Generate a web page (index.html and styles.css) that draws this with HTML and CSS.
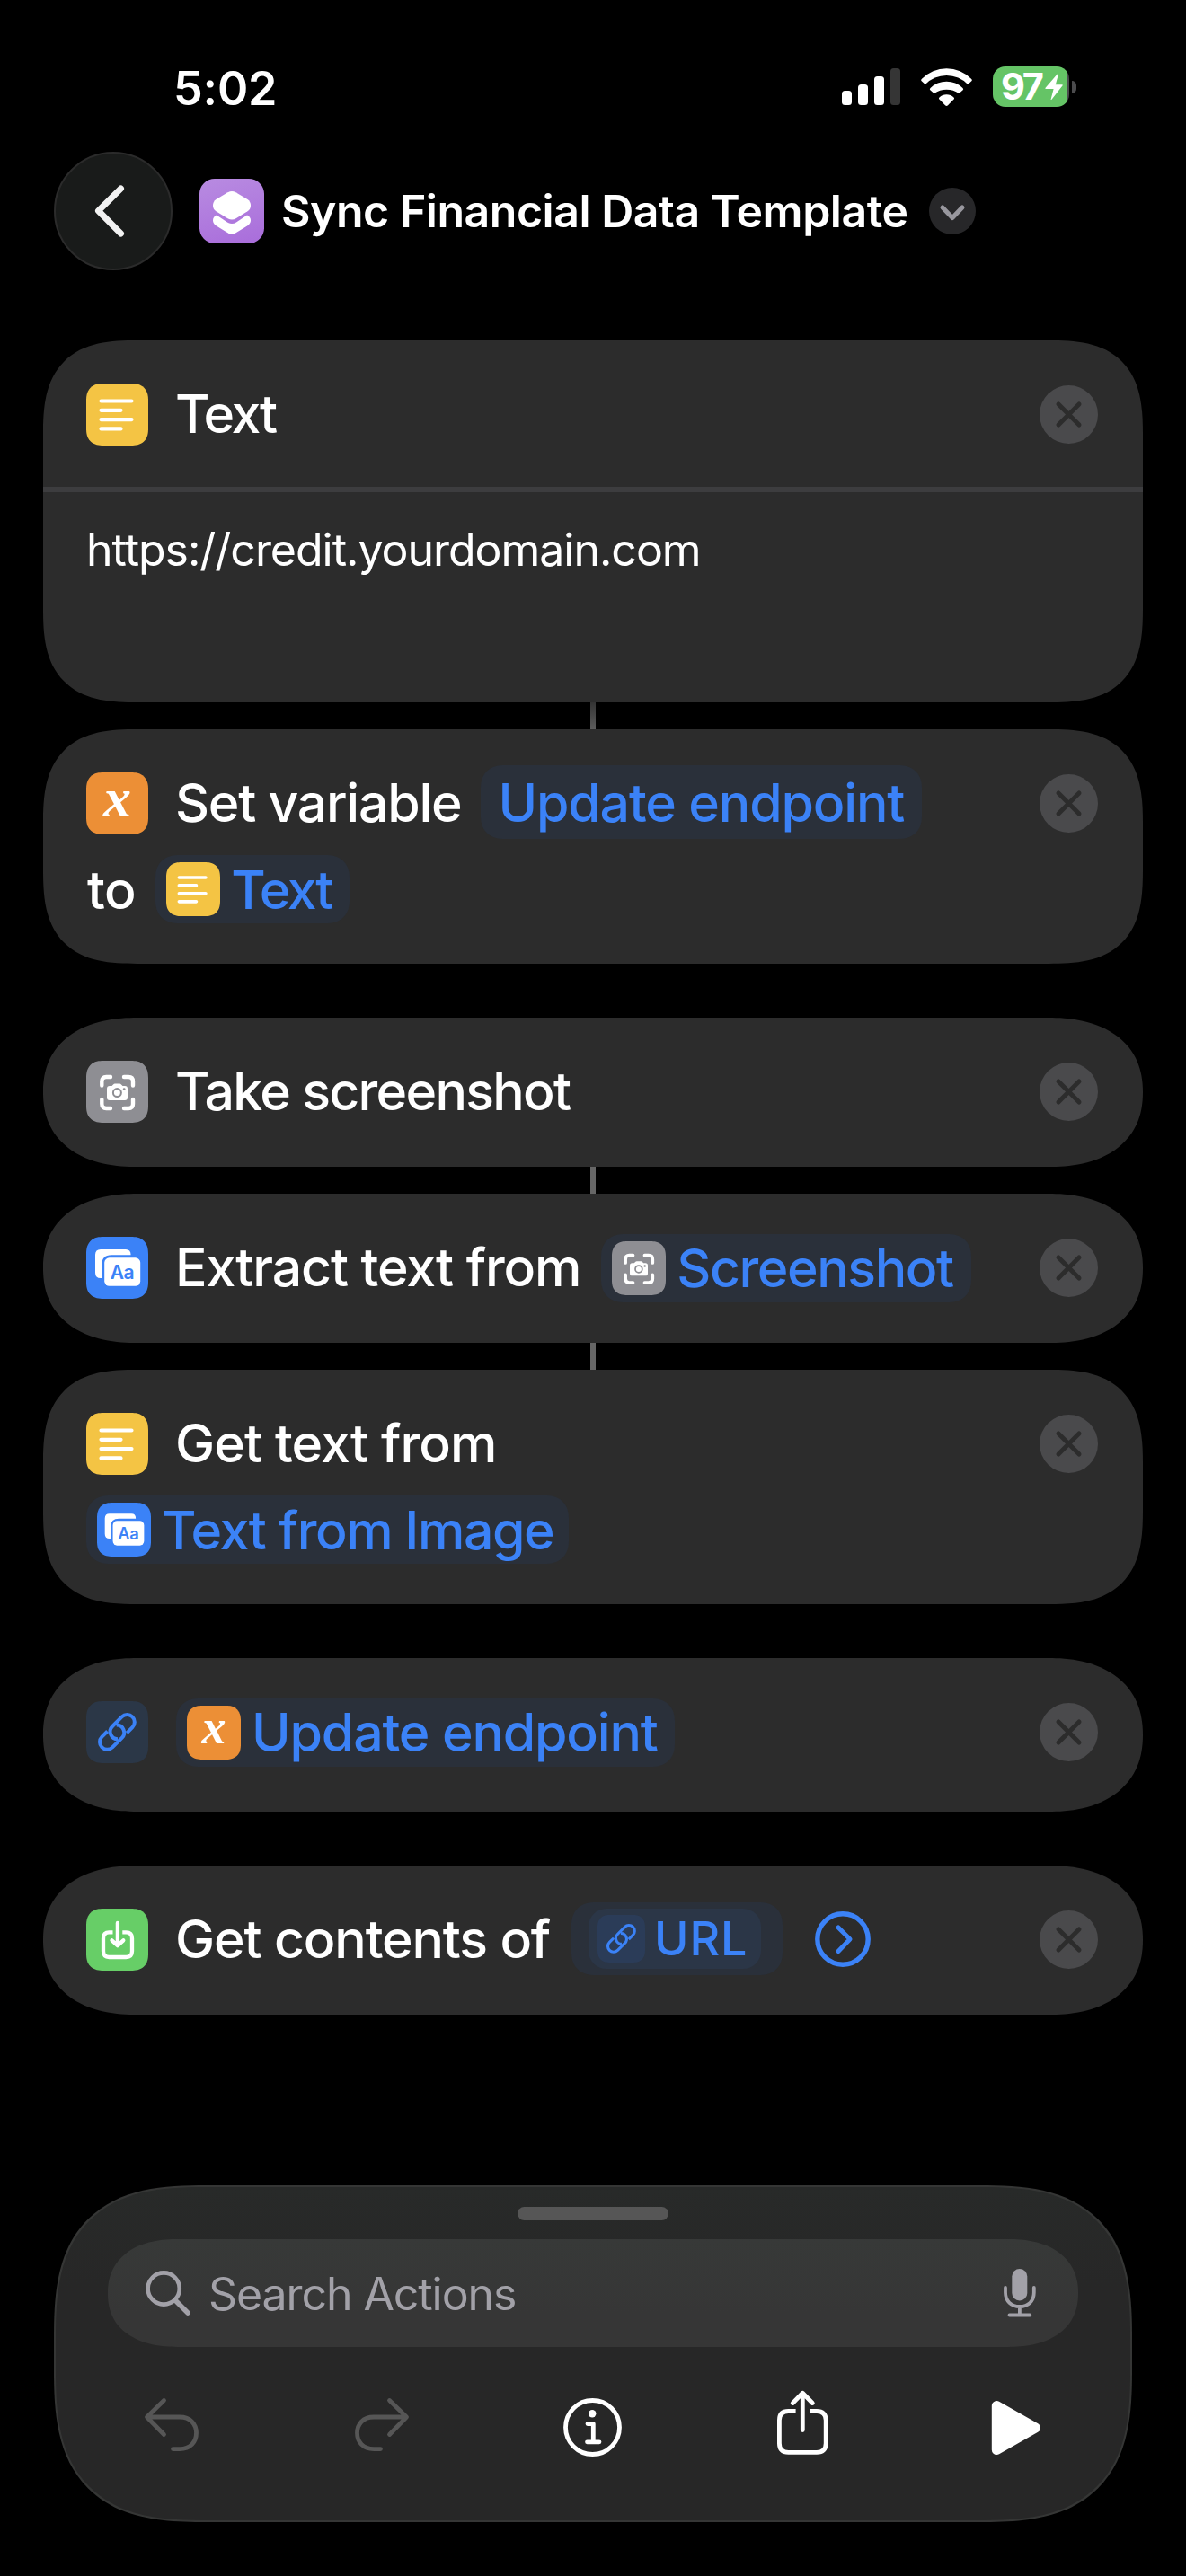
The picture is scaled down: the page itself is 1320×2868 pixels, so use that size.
FILE: index.html
```html
<!DOCTYPE html>
<html lang="en">
<head>
<meta charset="utf-8">
<title>Sync Financial Data Template</title>
<link rel="stylesheet" href="styles.css">
</head>
<body>
<svg class="defs" width="0" height="0" aria-hidden="true">
  <symbol id="i-lines" viewBox="0 0 69 69">
    <path d="M16.5 19.5H50.5M16.5 29.8H38.5M16.5 40.1H50.5M16.5 50.4H38.5" fill="none" stroke="#fff" stroke-width="4.2" stroke-linecap="round"/>
  </symbol>
  <symbol id="i-shot" viewBox="0 0 69 69">
    <path d="M17.3 27.5V23Q17.3 18 22.3 18H27M42 18H47Q52 18 52 23V27.5M52 43V48Q52 53 47 53H42M27 53H22.3Q17.3 53 17.3 48V43" fill="none" stroke="#fff" stroke-width="4.4" stroke-linecap="round"/>
    <path d="M26 28H28.5L30.3 26.2Q30.8 25.6 31.8 25.6H37.2Q38.2 25.6 38.7 26.2L40.5 28H43Q46 28 46 31V41Q46 44 43 44H26Q23 44 23 41V31Q23 28 26 28Z" fill="#fff"/>
    <circle cx="34.4" cy="35.6" r="4.5" fill="none" stroke="#8e8e93" stroke-width="2"/>
    <circle cx="42.2" cy="31.7" r="1.4" fill="#8e8e93"/>
  </symbol>
  <symbol id="i-link" viewBox="0 0 69 69">
    <g transform="translate(34.4 34.4) rotate(-45)" fill="none" stroke="#3b82f7" stroke-width="4">
      <path d="M7 8.3H15.7A8.3 8.3 0 0 0 15.7 -8.3H.8A8.3 8.3 0 0 0 -5 6"/>
      <path d="M-7 -8.3H-15.7A8.3 8.3 0 0 0 -15.7 8.3H-.8A8.3 8.3 0 0 0 5 -6"/>
    </g>
  </symbol>
  <symbol id="i-download" viewBox="0 0 69 69">
    <path d="M29.5 26.3H25.5Q19 26.3 19 33V47.3Q19 54 25.5 54H44.3Q51 54 51 47.3V33Q51 26.3 44.3 26.3H40.3" fill="none" stroke="#fff" stroke-width="4.3"/>
    <path d="M34.9 16V40M28.5 35.3L34.9 41.2L41.3 35.3" fill="none" stroke="#fff" stroke-width="4.3" stroke-linecap="round" stroke-linejoin="round"/>
  </symbol>
  <symbol id="i-remove" viewBox="0 0 65 65">
    <circle cx="32.5" cy="32.5" r="32.5" fill="#4a4a4c"/>
    <path d="M21 21L44 44M44 21L21 44" stroke="#2c2c2c" stroke-width="5" stroke-linecap="round"/>
  </symbol>
</svg>

<main class="phone">
  <div class="status">
    <span class="clock">5:02</span>
    <div class="indicators">
      <svg class="signal" viewBox="0 0 66 41"><rect x="0" y="25" width="11" height="16" rx="3.5" fill="#fff"/><rect x="18" y="18" width="11" height="23" rx="3.5" fill="#fff"/><rect x="36" y="9" width="11" height="32" rx="3.5" fill="#fff"/><rect x="54" y="0" width="11" height="41" rx="3.5" fill="#353535"/></svg>
      <svg class="wifi" viewBox="0 0 57 42"><g fill="#fff"><path d="M1 11.8A38.3 38.3 0 0 1 56 11.8Q57.5 13 56.3 14.2L52.2 18A33 33 0 0 0 4.8 18L.7 14.2Q-.5 13 1 11.8Z"/><path d="M10.5 22A25.7 25.7 0 0 1 46.5 22Q47.8 23.2 46.7 24.3L42.4 28A24.6 24.6 0 0 0 14.6 28L10.3 24.3Q9.2 23.2 10.5 22Z"/><path d="M20.5 32.4A11.5 11.5 0 0 1 36.5 32.4Q37.6 33.5 36.6 34.6L30 41.2Q28.5 42.6 27 41.2L20.4 34.6Q19.4 33.5 20.5 32.4Z"/></g></svg>
      <div class="battery"><span>97</span><svg viewBox="0 0 20 29"><path d="M14 .3Q15.3 -.4 14.9 1L11.8 12.2H19Q20.4 12.2 19.6 13.3L7.7 28.6Q6.3 29.8 6.7 28.2L9.6 17H1.2Q-.3 17 .6 15.8Z" fill="#fff"/></svg></div>
      <i class="battery-nub"></i>
    </div>
  </div>

  <header class="topbar">
    <button class="back" aria-label="Back"><svg viewBox="0 0 34 58"><path d="M29.5 4L4.5 28.8L29.5 54" fill="none" stroke="#f2f2f2" stroke-width="7" stroke-linecap="round" stroke-linejoin="round"/></svg></button>
    <svg class="app-icon" viewBox="0 0 72 72"><g fill="#fff"><path d="M31.5 15.3Q36 12.8 40.5 15.3L53.5 23Q57 25.5 57 29.8Q57 34 53.5 36.3L41 44Q36 47 31 44L18.5 36.3Q15 34 15 29.8Q15 25.5 18.5 23Z"/><path d="M19 40.6L31 48.4Q36 51.4 41 48.4L53 40.6Q57 42.5 57 46.3Q57 50 53.5 52.3L40.5 60.3Q36 63.1 31.5 60.3L18.5 52.3Q15 50 15 46.3Q15 42.5 19 40.6Z"/></g></svg>
    <h1 class="title">Sync Financial Data Template</h1>
    <svg class="menu" viewBox="0 0 52 52"><circle cx="26" cy="26" r="26" fill="#272729"/><path d="M15 22L26 33.5L37 22" fill="none" stroke="#98979e" stroke-width="5" stroke-linecap="round" stroke-linejoin="round"/></svg>
  </header>

  <section class="flow">
    <article class="card tall text-card">
      <div class="row">
        <span class="tile yellow"><svg><use href="#i-lines"/></svg></span>
        <span class="label t-text">Text</span>
        <svg class="remove"><use href="#i-remove"/></svg>
      </div>
      <p class="value">https://credit.yourdomain.com</p>
    </article>
    <i class="connector fade"></i>
    <article class="card tall">
      <div class="row">
        <span class="tile orange"><b class="var">x</b></span>
        <span class="label t-set">Set variable</span>
        <span class="chip plain">Update endpoint</span>
        <svg class="remove"><use href="#i-remove"/></svg>
      </div>
      <div class="row second">
        <span class="label lead">to</span>
        <span class="chip"><span class="tile small yellow"><svg><use href="#i-lines"/></svg></span><span class="t-text">Text</span></span>
      </div>
    </article>

    <article class="card spaced">
      <div class="row">
        <span class="tile grey"><svg><use href="#i-shot"/></svg></span>
        <span class="label t-take">Take screenshot</span>
        <svg class="remove"><use href="#i-remove"/></svg>
      </div>
    </article>
    <i class="connector"></i>
    <article class="card">
      <div class="row">
        <span class="tile blue"><svg viewBox="0 0 69 69"><path d="M16 14H44Q49.6 14 49.6 20.3H28Q17.3 20.3 17.3 31V46H16Q10 46 10 40V20Q10 14 16 14Z" fill="#fff"/><rect x="20.2" y="23.3" width="40" height="31.5" rx="5.5" fill="#fff"/><text x="40" y="47" text-anchor="middle" class="aa">Aa</text></svg></span>
        <span class="label t-extract">Extract text from</span>
        <span class="chip"><span class="tile small grey"><svg><use href="#i-shot"/></svg></span><span class="t-shot">Screenshot</span></span>
        <svg class="remove"><use href="#i-remove"/></svg>
      </div>
    </article>
    <i class="connector"></i>
    <article class="card tall">
      <div class="row">
        <span class="tile yellow"><svg><use href="#i-lines"/></svg></span>
        <span class="label t-get">Get text from</span>
        <svg class="remove"><use href="#i-remove"/></svg>
      </div>
      <div class="row second">
        <span class="chip first"><span class="tile small blue"><svg viewBox="0 0 69 69"><path d="M16 14H44Q49.6 14 49.6 20.3H28Q17.3 20.3 17.3 31V46H16Q10 46 10 40V20Q10 14 16 14Z" fill="#fff"/><rect x="20.2" y="23.3" width="40" height="31.5" rx="5.5" fill="#fff"/><text x="40" y="47" text-anchor="middle" class="aa">Aa</text></svg></span><span class="t-shot">Text from Image</span></span>
      </div>
    </article>

    <article class="card spaced link-card">
      <div class="row">
        <span class="tile navy"><svg><use href="#i-link"/></svg></span>
        <span class="chip after-tile"><span class="tile small orange"><b class="var">x</b></span><span>Update endpoint</span></span>
        <svg class="remove"><use href="#i-remove"/></svg>
      </div>
    </article>

    <article class="card spaced">
      <div class="row">
        <span class="tile green"><svg><use href="#i-download"/></svg></span>
        <span class="label">Get contents of</span>
        <span class="chip nest"><span class="inner"><span class="tile mini"><svg><use href="#i-link"/></svg></span><span>URL</span></span></span>
        <svg class="expand" viewBox="0 0 62 62"><circle cx="31" cy="31" r="28.2" fill="none" stroke="#3b82f7" stroke-width="5.4"/><path d="M26 18L39 31L26 44.5" fill="none" stroke="#3b82f7" stroke-width="5" stroke-linecap="round" stroke-linejoin="round"/></svg>
        <svg class="remove"><use href="#i-remove"/></svg>
      </div>
    </article>
  </section>

  <footer class="panel">
    <i class="grabber"></i>
    <div class="search">
      <svg class="glass" viewBox="0 0 50 50"><circle cx="20.2" cy="20" r="17.6" fill="none" stroke="#a2a1a8" stroke-width="4.6"/><path d="M33 33L47 47" stroke="#a2a1a8" stroke-width="5.6" stroke-linecap="round"/></svg>
      <span class="placeholder">Search Actions</span>
      <svg class="mic" viewBox="0 0 36 54"><rect x="9.3" y="0" width="17" height="35.5" rx="8.5" fill="#a2a1a8"/><path d="M2 21V26.5C2 36 8.5 42 17.9 42S33.8 36 33.8 26.5V21M17.9 42V51M6.5 51.5H29.3" fill="none" stroke="#a2a1a8" stroke-width="3.8" stroke-linecap="round"/></svg>
    </div>
    <nav class="tools">
      <svg viewBox="0 0 96 96" class="dim"><path d="M39.5 18.5L20.5 37L39.5 56.5M21 37H57C69 37 75.5 45 75.5 54.8S69 72.6 57 72.6H49.5"/></svg>
      <svg viewBox="0 0 96 96" class="dim"><path d="M56.5 18.5L75.5 37L56.5 56.5M75 37H39C27 37 20.5 45 20.5 54.8S27 72.6 39 72.6H46.5"/></svg>
      <svg viewBox="0 0 96 96"><circle cx="48.5" cy="48.5" r="30"/><circle class="solid" cx="48.2" cy="33.2" r="4.2"/><path d="M43 44.5H49.3V64.5M42.5 64.8H56"/></svg>
      <svg viewBox="0 0 96 96"><path class="butt" d="M40.6 30.5H32.5Q22.4 30.5 22.4 40.5V66.3Q22.4 76.3 32.5 76.3H64Q74.2 76.3 74.2 66.3V40.5Q74.2 30.5 64 30.5H56"/><path d="M48.3 10.5V51.5M37.3 21.5L48.3 10.3L59.3 21.5"/></svg>
      <svg viewBox="0 0 96 96"><path class="solid play" d="M30.3 24.5V73.5L73.5 49Z"/></svg>
    </nav>
  </footer>
</main>
</body>
</html>
```
FILE: styles.css
```css
* { box-sizing: border-box; }

body {
  margin: 0;
  background: #000;
  color: #fff;
  font-family: Inter, "Liberation Sans", sans-serif;
}

.defs { position: absolute; }

.phone {
  display: flex;
  flex-direction: column;
  width: 1320px;
  height: 2868px;
  padding: 69px 0 60px;
  overflow: hidden;
}

/* status bar */
.status {
  display: flex;
  align-items: center;
  justify-content: space-between;
  height: 58px;
  padding: 0 122px 0 193px;
}
.clock { font-size: 52px; font-weight: 600; letter-spacing: -0.2px; }
.indicators { display: flex; align-items: center; margin-bottom: 3px; }
.signal { width: 66px; height: 41px; }
.wifi { width: 57px; height: 42px; margin-left: 22px; }
.battery {
  display: flex;
  align-items: center;
  width: 85px;
  height: 45px;
  margin-left: 23px;
  padding-left: 9px;
  border-radius: 14px;
  background: linear-gradient(90deg, #65c466 83px, #4b4b4d 83px);
}
.battery span { width: 49px; font-size: 41.5px; font-weight: 700; line-height: 45px; letter-spacing: -2.4px; }
.battery svg { width: 20px; height: 29px; }
.battery-nub { width: 5px; height: 14px; margin-left: 3px; border-radius: 0 5px 5px 0; background: #4b4b4d; }

/* title bar */
.topbar { display: flex; align-items: center; height: 132px; margin-top: 42px; padding-left: 60px; }
.back {
  display: grid;
  place-items: center;
  width: 132px;
  height: 132px;
  padding: 0 8px 0 0;
  border: 2px solid #2b2b2b;
  border-radius: 50%;
  background: #191b1a;
}
.back svg { width: 34px; height: 58px; }
.app-icon {
  width: 72px;
  height: 72px;
  margin-left: 30px;
  border-radius: 17px;
  background: linear-gradient(165deg, #b88be1, #a96ddb);
}
.title { margin: 0 0 0 19px; font-size: 50px; font-weight: 600; letter-spacing: -0.47px; line-height: 60px; white-space: nowrap; }
.menu { width: 52px; height: 52px; margin-left: 23px; }

/* action list */
.flow { display: flex; flex-direction: column; margin: 78px 48px 0; }
.card {
  height: 166px;
  padding: 48px 50px 0 48px;
  border-radius: 105px / 83px;
  corner-shape: superellipse(1.2);
  background: #2c2c2c;
}
.card.tall { height: 261px; border-radius: 105px; corner-shape: superellipse(1.46); }
.card.text-card { height: 403px; padding: 48px 0 0; }
.text-card .row { height: 115px; padding: 0 50px 46px 48px; }
.card.spaced { margin-top: 60px; }
.card.link-card { height: 171px; border-radius: 105px / 85.5px; }
.value {
  margin: 0;
  padding: 34px 48px 0;
  border-top: 6px solid #3d3d3f;
  font-size: 50px;
  line-height: 60px;
  letter-spacing: -1.02px;
}
.connector { align-self: center; width: 6px; height: 30px; background: #666; }
.connector.fade { background: linear-gradient(#333, #5c5c5c); }

.row { display: flex; align-items: center; height: 69px; font-size: 59px; font-weight: 500; letter-spacing: -1.16px; line-height: 72px; white-space: nowrap; }
.row.second { height: 76px; margin-top: 23px; }
.label { margin: 0 22px 2px 30px; }
.label.lead { margin: 1px 22px 0 1px; letter-spacing: -0.5px; }
.t-set { letter-spacing: -1.26px; }
.t-text { letter-spacing: -2.4px; }
.t-take { letter-spacing: -1.71px; }
.t-extract { letter-spacing: -1.11px; margin-right: 23px; }
.t-shot { letter-spacing: -1.45px; }
.t-get { letter-spacing: -0.91px; }
.second .chip > span:last-child { padding-top: 2px; }
.remove { width: 65px; height: 65px; margin-left: auto; }

.tile {
  display: grid;
  flex: none;
  place-items: center;
  width: 69px;
  height: 69px;
  border-radius: 19px;
  corner-shape: superellipse(1.3);
}
.tile svg { width: 100%; height: 100%; }
.tile.small { width: 60px; height: 60px; margin-right: 12px; border-radius: 17px; }
.yellow { background: #f4c444; }
.orange { background: #ec8f36; }
.grey { background: #8e8e93; }
.blue { background: #3b82f7; }
.green { background: #67ce67; }
.navy { background: #2b3747; }
.var { height: 69px; color: #fff; font: italic bold 62px/57px "Liberation Serif", serif; letter-spacing: 0; }
.small .var { height: 60px; font-size: 54px; line-height: 49px; }
.aa { font: 600 21px Inter, sans-serif; letter-spacing: -0.5px; fill: #3b82f7; }

.chip {
  display: flex;
  align-items: center;
  height: 76px;
  padding: 0 20px 0 12px;
  border-radius: 26px;
  corner-shape: superellipse(1.2);
  background: #2a303a;
  color: #3b82f7;
}
.chip.plain { height: 82px; margin-bottom: 3px; padding: 1px 20px 0 19px; }
.chip.first { padding-right: 17px; }
.chip.after-tile { margin-left: 31px; padding-right: 19px; }
.chip.nest { height: 81px; margin: 0 0 2px 2px; padding: 0 24px 0 19px; }
.inner {
  display: flex;
  align-items: center;
  height: 67px;
  padding: 0 15px 0 10px;
  border-radius: 20px;
  background: #2b3647;
  font-size: 52px;
  letter-spacing: 0.9px;
}
.tile.mini { width: 53px; height: 53px; margin-right: 10px; border-radius: 14px; background: #2b3c58; }
.expand { width: 62px; height: 62px; margin: 0 0 2px 36px; }

/* bottom panel */
.panel {
  display: flex;
  flex-direction: column;
  align-items: center;
  height: 375px;
  margin: auto 60px 0;
  border: 2px solid #353635;
  border-radius: 170px;
  corner-shape: superellipse(1.46);
  background: linear-gradient(#282a29, #272727 30%);
}
.grabber { width: 168px; height: 15px; margin-top: 22px; border-radius: 8px; background: #565656; }
.search {
  display: flex;
  align-items: center;
  width: 1080px;
  height: 120px;
  margin-top: 21px;
  padding: 0 47px 0 42px;
  border-radius: 78px / 60px;
  corner-shape: superellipse(1.2);
  background: linear-gradient(#373938, #363636 70%);
  color: #a2a1a8;
}
.glass { width: 50px; height: 50px; }
.placeholder { margin-left: 20px; font-size: 50px; letter-spacing: -1.08px; line-height: 60px; padding-top: 2px; }
.mic { width: 36px; height: 54px; margin-left: auto; }
.tools { display: grid; grid-template-columns: repeat(5, 234px); justify-items: center; margin-top: 41px; padding-right: 2px; }
.tools svg { width: 96px; height: 96px; fill: none; stroke: #fff; stroke-width: 4.8px; stroke-linecap: round; stroke-linejoin: round; }
.tools .dim { stroke: #565656; }
.tools .solid { fill: #fff; stroke: none; }
.tools .play { stroke: #fff; stroke-width: 11px; }
.tools .butt { stroke-linecap: butt; }
```
